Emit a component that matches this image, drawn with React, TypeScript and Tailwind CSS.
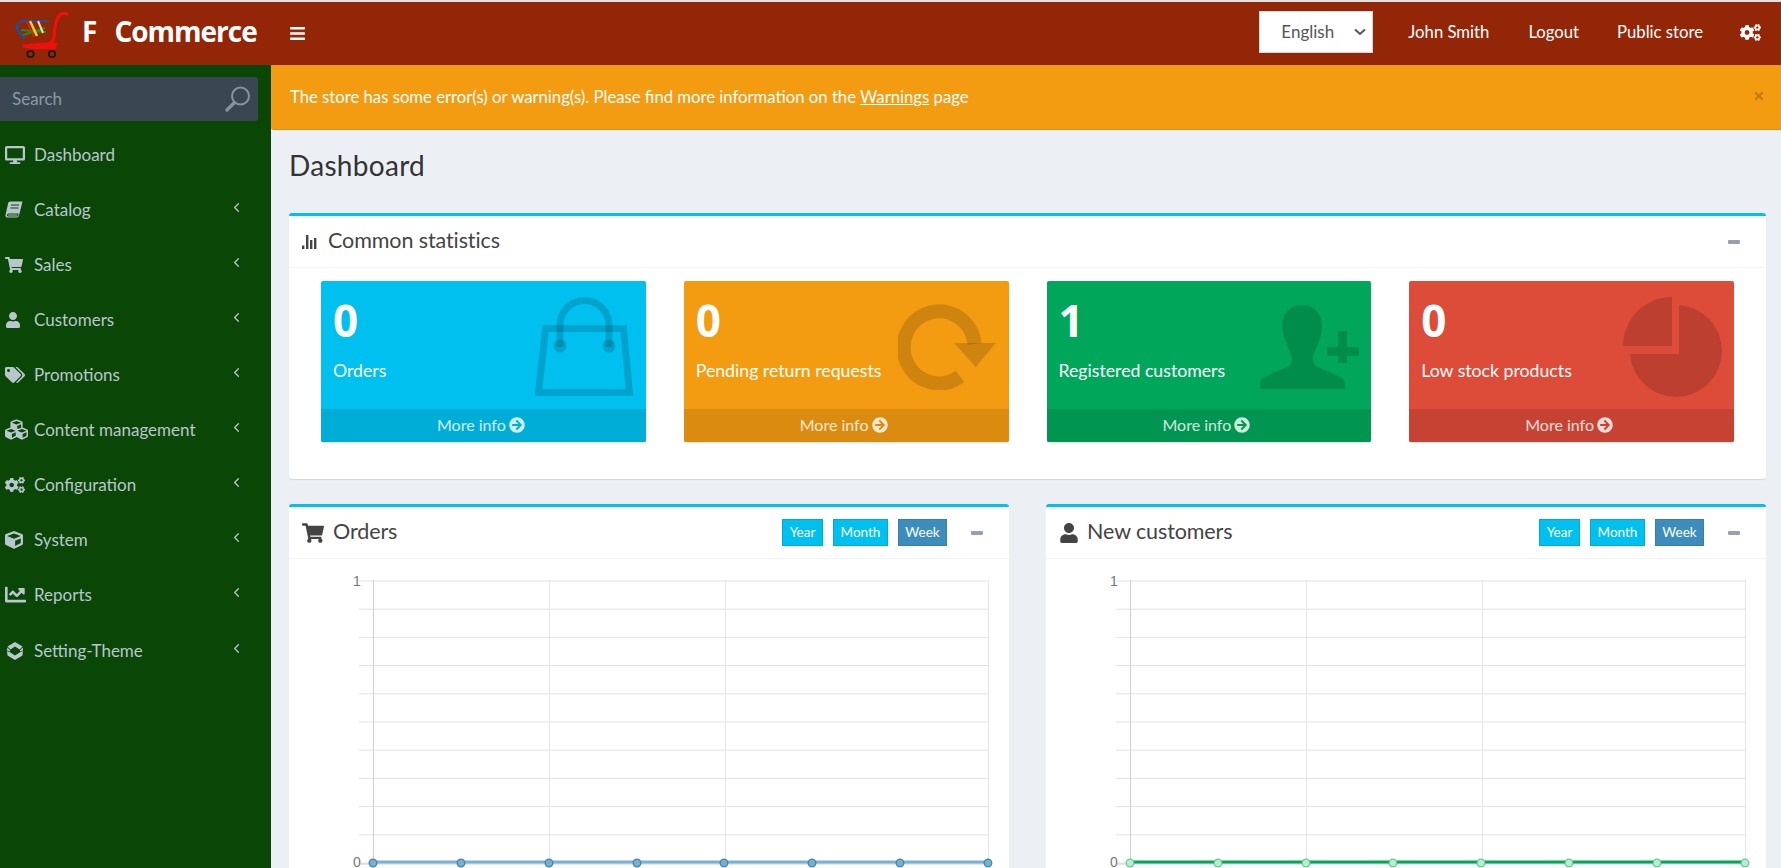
import React from "react";
import { FaDesktop, FaShoppingCart, FaUser, FaTags, FaCubes, FaCogs, FaCube, FaChartLine, FaBars, FaArrowCircleRight, FaTimes } from "react-icons/fa";
import { ChevronLeft } from "lucide-react";

const Logo = () => (
  <svg width="56" height="50" viewBox="12 8 56 50" className="shrink-0">
    <path d="M15.5 24 Q19 19 26 20 L48 20" stroke="#1f4f9e" strokeWidth="2" fill="none" />
    <path d="M15.5 24 Q17 31 23 37" stroke="#1f4f9e" strokeWidth="3" fill="none" />
    <path d="M20 29 L45 31 M22 34 L44 27" stroke="#2e8b1a" strokeWidth="2" fill="none" />
    <path d="M29 20 L36 35" stroke="#f2d21b" strokeWidth="2.5" fill="none" />
    <path d="M37 20 L42 32" stroke="#e8e4b0" strokeWidth="2" fill="none" />
    <path d="M26 21 L33 36" stroke="#d7261e" strokeWidth="1.5" fill="none" />
    <path d="M66 13 Q60 11 57 16 Q54 22 53 36 Q52 43 46 43 Q32 44 23 45" stroke="#f01010" strokeWidth="3" fill="none" strokeLinecap="round" />
    <path d="M24 47 Q40 49 55 48 L56 42 L52 42 Q50 45 24 46 Z" fill="#f01010" />
    <circle cx="29.5" cy="53" r="3.2" fill="#932606" stroke="#1a1a1a" strokeWidth="1.8" />
    <circle cx="51" cy="53" r="3.2" fill="#932606" stroke="#1a1a1a" strokeWidth="1.8" />
  </svg>
);

const ThemeIcon = () => (
  <svg width="18" height="18" viewBox="0 0 18 18" className="shrink-0 ml-[1px]">
    <path d="M9 0 L16.5 4.5 L13.6 7.6 L9 4.4 L4.4 7.6 L1.5 4.5 Z" fill="#b8c7ce" />
    <path d="M1 9 L4.4 10.4 L9 13.6 L13.6 10.4 L17 9 L16.5 13.5 L9 18 L1.5 13.5 Z" fill="#b8c7ce" />
    <path d="M1.5 5.5 L4 8.2 L4 9.6 L0.8 8.2 Z M16.5 5.5 L14 8.2 L14 9.6 L17.2 8.2 Z" fill="#b8c7ce" />
  </svg>
);

const BookIcon = () => (
  <svg width="18" height="17" viewBox="0 0 18 17" className="shrink-0">
    <path d="M5 0.5 H17.5 L14 14.5 Q13.6 16.5 11.5 16.5 H2.5 Q0 16.5 0.6 13.5 L3.2 2 Q3.6 0.5 5 0.5 Z" fill="#b8c7ce" />
    <path d="M2.8 13 H13.2 L12.6 15 H2.6 Z M6 4 H14 M5.4 7 H13.4" stroke="#0a4606" strokeWidth="1" fill="none" />
  </svg>
);

const SearchGlass = () => (
  <svg width="26" height="26" viewBox="0 0 26 26" fill="none" stroke="#87939b">
    <circle cx="15.5" cy="10" r="8.5" strokeWidth="2" />
    <path d="M9 17 L2 24" strokeWidth="3.4" strokeLinecap="round" />
  </svg>
);

const BarsIcon = () => (
  <svg width="16" height="14" viewBox="0 0 16 14" fill="#444" className="shrink-0">
    <rect x="0" y="10.5" width="2.4" height="3.5" />
    <rect x="4" y="0" width="2.4" height="14" />
    <rect x="8" y="5" width="2.4" height="9" />
    <rect x="12" y="3" width="2.4" height="11" />
  </svg>
);

const BagIcon = () => (
  <svg width="100" height="100" viewBox="0 0 100 100" fill="none" stroke="currentColor">
    <path d="M10.5 31.5 H88.5 L94.5 95.5 H3.5 Z" strokeWidth="7" />
    <path d="M25 50 V28 A 24.5 24.5 0 0 1 74 28 V50" strokeWidth="7" />
    <ellipse cx="25" cy="49" rx="6.5" ry="6.8" fill="currentColor" stroke="none" />
    <ellipse cx="74" cy="49" rx="6.5" ry="6.8" fill="currentColor" stroke="none" />
  </svg>
);

const RefreshIcon = () => (
  <svg width="100" height="86" viewBox="0 0 100 86" fill="none">
    <path d="M76.5 40 A35.5 36 0 1 0 62 72.5" stroke="currentColor" strokeWidth="14" />
    <path d="M56 39 H98 L77.6 63 Z" fill="currentColor" />
  </svg>
);

const PersonAddIcon = () => (
  <svg width="100" height="84" viewBox="0 0 100 84" fill="currentColor">
    <path d="M42 0 C54 0 62 8 62 21 C62 28 60 34 58 39 C56 45 53 49 53 55 C53 60 56 61 65 65 C76 70 85 73 85 78 V84 H0 V78 C0 73 9 70 20 65 C29 61 32 60 32 55 C32 49 28 45 27 39 C25 34 22 28 22 21 C22 8 30 0 42 0 Z" />
    <path d="M78 26 H87 V42 H99 V51 H87 V58 H78 V51 H67 V42 H78 Z" />
  </svg>
);

const PieIcon = () => (
  <svg width="100" height="100" viewBox="1624 297 100 100" fill="currentColor">
    <path d="M1673 297 V346 H1624 A49 49 0 0 1 1673 297 Z" />
    <path d="M1680 305 A46 46 0 1 1 1631 354 H1680 Z" />
  </svg>
);

const menu: [React.ReactNode, string, boolean][] = [
  [<FaDesktop size={20} />, "Dashboard", false],
  [<BookIcon />, "Catalog", true],
  [<FaShoppingCart size={18} />, "Sales", true],
  [<FaUser size={16} />, "Customers", true],
  [<FaTags size={20} />, "Promotions", true],
  [<FaCubes size={23} />, "Content management", true],
  [<FaCogs size={20} />, "Configuration", true],
  [<FaCube size={18} />, "System", true],
  [<FaChartLine size={21} />, "Reports", true],
  [<ThemeIcon />, "Setting-Theme", true],
];

const MinusMark = () => <span className="block w-[12px] h-[4px] rounded-[1px] bg-[#97a0b3]" />;

const boxes = [
  { n: "0", label: "Orders", bg: "bg-[#00c0ef]", foot: "bg-[#00add7]", icon: <BagIcon />, cls: "top-[16px] right-[11px]" },
  { n: "0", label: "Pending return requests", bg: "bg-[#f39c12]", foot: "bg-[#db8c10]", icon: <RefreshIcon />, cls: "top-[23px] right-[11px]" },
  { n: "1", label: "Registered customers", bg: "bg-[#00a65a]", foot: "bg-[#009551]", icon: <PersonAddIcon />, cls: "top-[24px] right-[11px]" },
  { n: "0", label: "Low stock products", bg: "bg-[#dd4b39]", foot: "bg-[#c64333]", icon: <PieIcon />, cls: "top-[16px] right-[11px]" },
];

const StatBox = ({ b }: { b: (typeof boxes)[number] }) => (
  <div className={`relative h-[161px] rounded-[2px] overflow-hidden shadow-[0_1px_1px_rgba(0,0,0,0.1)] text-white ${b.bg}`}>
    <div className="h-[128px] pl-[12px] pt-[14px]">
      <div className="text-[44px] leading-[50px] font-bold font-['Open_Sans',sans-serif]">{b.n}</div>
      <div className="mt-[14px] text-[17.7px] leading-[24px]">{b.label}</div>
    </div>
    <div className={`absolute text-black/15 ${b.cls}`}>{b.icon}</div>
    <div className={`h-[33px] pb-[1px] pr-[5px] flex items-center justify-center gap-[3px] text-white/80 text-[16px] ${b.foot}`}>
      More info <FaArrowCircleRight size={16} />
    </div>
  </div>
);

const Chart = ({ xs, grid, left, dot, dotFill, line }: { xs: number[]; grid: number[]; left: number; dot: string; dotFill: string; line: string }) => {
  const ys = Array.from({ length: 11 }, (_, i) => 22 + i * 28.2);
  const right = grid[grid.length - 1];
  return (
    <svg width="100%" height="310" className="block">
      {ys.map((y, i) => (
        <line key={i} x1={left} x2={right} y1={y} y2={y} stroke="#e2e2e2" strokeWidth="1" />
      ))}
      {grid.map((x, i) => (
        <line key={i} x1={x} x2={x} y1={21} y2={304} stroke={i === 0 ? "#cfcfcf" : "#e6e6e6"} strokeWidth="1" />
      ))}
      <line x1={left} x2={right} y1={305} y2={305} stroke="#cfcfcf" strokeWidth="1" />
      <text x={left - 6} y={27} fontSize="14" fill="#777" fontFamily="'Liberation Sans',sans-serif">1</text>
      <text x={left - 6} y={308} fontSize="14" fill="#777" fontFamily="'Liberation Sans',sans-serif">0</text>
      <line x1={xs[0]} x2={xs[7]} y1={303} y2={303} stroke={line} strokeWidth="3" />
      {xs.map((x, i) => (
        <circle key={i} cx={x} cy={304} r="3.8" fill={dotFill} stroke={dot} strokeWidth="1.3" />
      ))}
    </svg>
  );
};

const CardHead = ({ icon, title, buttons }: { icon: React.ReactNode; title: string; buttons?: boolean }) => (
  <div className="h-[52px] flex items-center border-b border-[#f4f4f4] pl-[13px] pr-[26px]">
    {icon}
    <span className="text-[21.5px] text-[#444] tracking-[-0.1px] -mt-[2px]">{title}</span>
    <div className="ml-auto flex items-center">
      {buttons && (
        <div className="flex items-center gap-[10px] mr-[24px] text-[13.5px] text-white">
          <span className="h-[27px] w-[41px] flex items-center justify-center bg-[#00c0ef] border border-[#00acd6]">Year</span>
          <span className="h-[27px] w-[55px] flex items-center justify-center bg-[#00c0ef] border border-[#00acd6]">Month</span>
          <span className="h-[27px] w-[49px] flex items-center justify-center bg-[#3c8dbc] border border-[#367fa9]">Week</span>
        </div>
      )}
      <MinusMark />
    </div>
  </div>
);

export default function App() {
  return (
    <div className="h-[868px] w-[1781px] overflow-hidden flex flex-col bg-[#ecf0f5] font-['Lato',sans-serif]">
      <div className="h-[2px] bg-[#e2e2e2]" />
      <header className="h-[63px] bg-[#932606] flex items-center text-white shrink-0">
        <div className="w-[271px] flex items-center pl-[13px] shrink-0">
          <Logo />
          <div className="ml-[13px] -mt-[5px] flex text-[28px] font-bold font-['Open_Sans',sans-serif] tracking-[-1px]">
            <span>F</span>
            <span className="ml-[18px]">Commerce</span>
          </div>
        </div>
        <FaBars size={17} className="ml-[18px]" />
        <div className="ml-auto flex items-center pr-[20px] pb-[3px] text-[16.7px]">
          <div className="relative w-[114px] h-[42px]">
            <select className="appearance-none w-full h-full bg-white text-[#555] border border-[#d2d6de] pl-[21px] text-[17px] outline-none">
              <option>English</option>
            </select>
            <svg width="12" height="8" viewBox="0 0 12 8" fill="none" stroke="#555" strokeWidth="2" className="absolute right-[7px] top-[17px]">
              <path d="M1 1.5 L6 6 L11 1.5" />
            </svg>
          </div>
          <span className="ml-[35px] mt-[2px]">John Smith</span>
          <span className="ml-[39px] mt-[2px]">Logout</span>
          <span className="ml-[38px] mt-[2px]">Public store</span>
          <FaCogs size={21} className="ml-[37px]" />
        </div>
      </header>
      <div className="flex flex-1 min-h-0">
        <aside className="w-[271px] bg-[#0a4606] shrink-0 pt-[12px] text-[#b8c7ce] text-[17px]">
          <div className="w-[258px] h-[44px] rounded-r-[3px] bg-[#3a4751] flex items-center justify-between pl-[12px] pr-[7px]">
            <span className="text-[#8a9aa5]">Search</span>
            <SearchGlass />
          </div>
          <nav className="mt-[6px]">
            {menu.map(([icon, label, arrow]) => (
              <div key={label} className={`h-[55px] flex items-center relative pl-[5px] ${label === "Setting-Theme" ? "mt-[1px]" : ""}`}>
                <span className="w-[29px] flex items-center">{icon}</span>
                <span>{label}</span>
                {arrow && <ChevronLeft size={15} strokeWidth={2} className="ml-auto mr-[27px] -mt-[4px]" />}
              </div>
            ))}
          </nav>
        </aside>
        <main className="flex-1 min-w-0 overflow-hidden">
          <div className="h-[65px] pt-[2px] bg-[#f39c12] border-b border-[#e08e0b] rounded-bl-[3px] flex items-center pl-[19px] pr-[16px] text-white text-[16.7px]">
            <span>The store has some error(s) or warning(s). Please find more information on the <span className="underline">Warnings</span> page</span>
            <FaTimes size={12} className="ml-auto -mt-[4px] text-black/20" />
          </div>
          <div className="pl-[18px] pr-[15px]">
            <h1 className="mt-[17px] h-[36px] leading-[36px] text-[28px] text-[#333] tracking-[0.3px]">Dashboard</h1>
            <section className="mt-[30px] h-[266px] bg-white rounded-[3px] border-t-[3px] border-[#00c0ef] shadow-[0_1px_1px_rgba(0,0,0,0.1)]">
              <CardHead icon={<span className="mr-[10px]"><BarsIcon /></span>} title="Common statistics" />
              <div className="grid grid-cols-4 gap-[38px] px-[32px] pt-[13px]">
                {boxes.map((b) => <StatBox key={b.label} b={b} />)}
              </div>
            </section>
            <div className="mt-[25px] grid grid-cols-2 gap-[37px]">
              <section className="bg-white rounded-t-[3px] border-t-[3px] border-[#00c0ef]">
                <CardHead icon={<FaShoppingCart size={22} className="text-[#444] mr-[9px]" />} title="Orders" buttons />
                <Chart xs={[84, 172, 260, 348, 435, 523, 611, 699]} grid={[84.5, 260.5, 436.5, 699.5]} left={70} dot="#3f86b0" dotFill="#7aaecd" line="#7bb0d1" />
              </section>
              <section className="bg-white rounded-t-[3px] border-t-[3px] border-[#00c0ef]">
                <CardHead icon={<FaUser size={20} className="text-[#444] mr-[8px]" />} title="New customers" buttons />
                <Chart xs={[84, 172, 260, 347, 435, 523, 611, 699]} grid={[84.5, 260.5, 436.5, 699.5]} left={70} dot="#5fcf90" dotFill="#bfead2" line="#00a65a" />
              </section>
            </div>
          </div>
        </main>
      </div>
    </div>
  );
}
